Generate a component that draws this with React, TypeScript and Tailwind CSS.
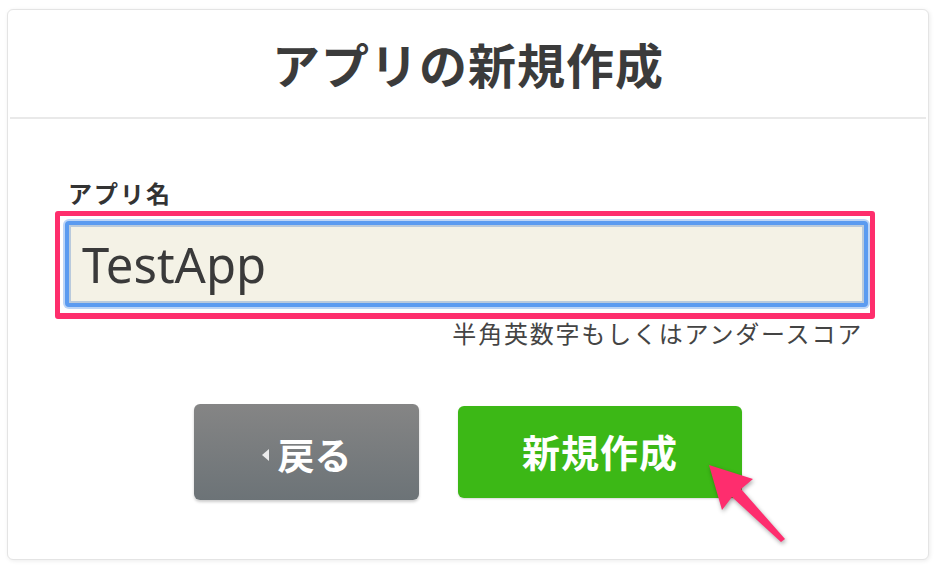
export default function App() {
  return (
    <div
      className="relative h-[576px] w-[942px] overflow-hidden bg-white pl-[7px] pt-[9px]"
      style={{ fontFamily: '"Noto Sans", "Noto Sans CJK JP", sans-serif' }}
    >
      <div className="flex h-[551px] w-[922px] flex-col rounded-[6px] border border-[#e4e4e4] bg-white shadow-[1px_1px_4px_rgba(0,0,0,0.08)]">
        <header className="flex h-[107px] items-center justify-center pt-[4px]">
          <h1 className="text-[48px] font-bold leading-none tracking-[1px] text-[#3b3b3b]">
            アプリの新規作成
          </h1>
        </header>
        <div className="mx-[2px] h-[2px] bg-[#e9e9e9]" />

        <section className="flex flex-col px-[47px]">
          <label className="ml-[13px] mt-[63px] text-[24px] font-bold leading-[24px] tracking-[2px] text-[#333]">
            アプリ名
          </label>

          <div className="mt-[5px] w-[820px] rounded-[3px] border-[5px] border-b-[6px] border-[#fe2e6c] bg-white pb-[4px] pl-[3px] pr-0 pt-[3px]">
            <div className="rounded-[6px] bg-[#bcd5f7] p-[2px]">
              <div className="rounded-[4px] border-[4px] border-[#5b9bf0]">
                <div className="border-[2px] border-[#b9cadc] bg-[#f4f2e6]">
                  <input
                    readOnly
                    value="TestApp"
                    className="block h-[74px] w-full bg-transparent pl-[11px] text-[49px] leading-[74px] text-[#3a3a3a] outline-none"
                    style={{ fontFamily: '"Noto Sans", sans-serif' }}
                  />
                </div>
              </div>
            </div>
          </div>

          <p className="mr-[18px] self-end text-[24px] leading-[30px] tracking-[1.8px] text-[#444]">
            半角英数字もしくはアンダースコア
          </p>

          <div className="mt-[55px] flex items-center justify-center gap-[39px]">
            <button className="flex h-[96px] w-[225px] items-center justify-center rounded-[6px] bg-gradient-to-b from-[#858585] to-[#6c7377] pt-[6px] text-white shadow-[0_2px_3px_rgba(0,0,0,0.2)]">
              <svg viewBox="0 0 7 12" className="mr-[9px] h-[12px] w-[7px]">
                <polygon points="7,0 7,12 0,6" fill="rgba(255,255,255,0.85)" />
              </svg>
              <span className="text-[37px] font-bold leading-none">戻る</span>
            </button>
            <button className="flex h-[92px] w-[284px] items-center justify-center rounded-[6px] bg-[#3cb816] text-white shadow-[0_1px_2px_rgba(0,0,0,0.15)]">
              <span className="text-[38px] font-bold leading-none tracking-[1px]">新規作成</span>
            </button>
          </div>
        </section>
      </div>

      <svg
        className="pointer-events-none absolute left-[700px] top-[455px] h-[95px] w-[95px] drop-shadow-[1px_2px_2px_rgba(0,0,0,0.35)]"
        viewBox="0 0 95 95"
      >
        <polygon
          points="9,10 53,24 41,34 85,84 81,87 32,42 22,55"
          fill="#fe2d6e"
        />
      </svg>
    </div>
  )
}
